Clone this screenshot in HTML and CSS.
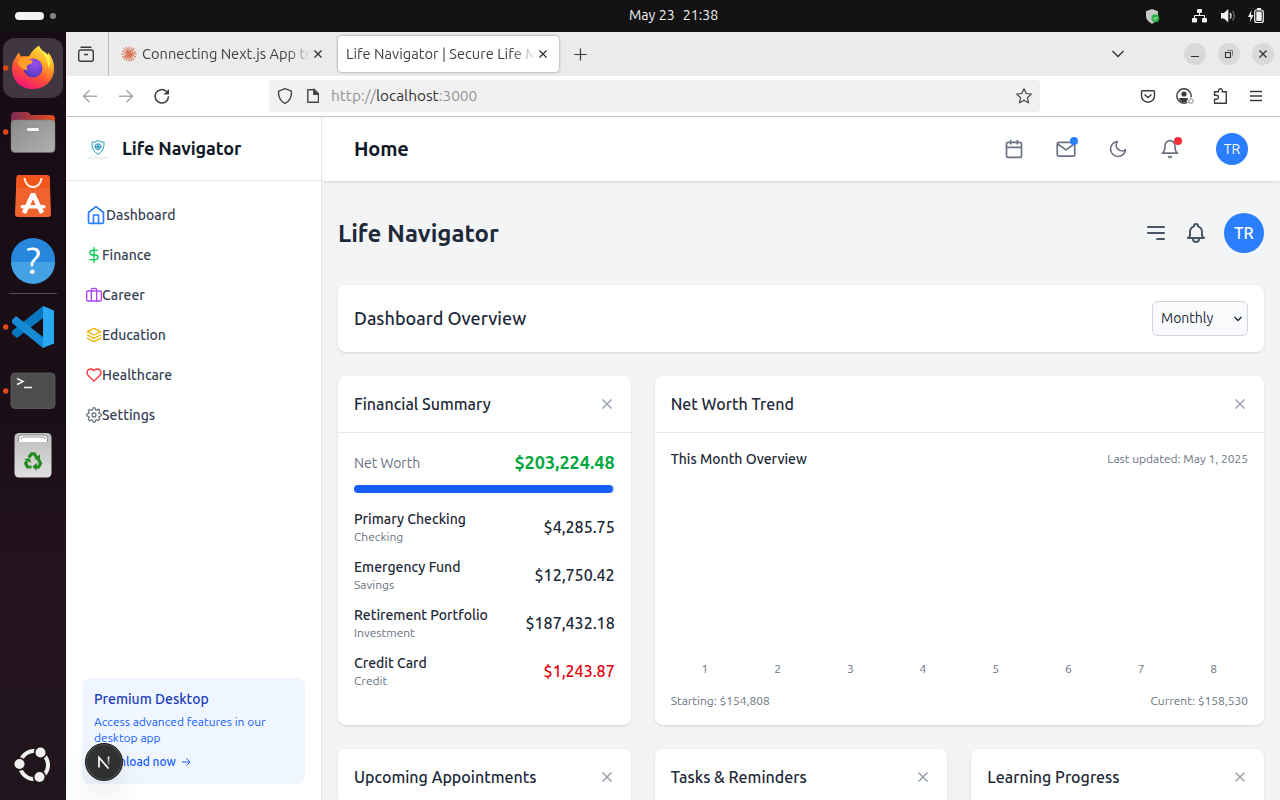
FILE: index.html
```html
<!DOCTYPE html>
<html lang="en">
<head>
<meta charset="utf-8">
<title>Life Navigator | Secure Life Management</title>
<link rel="stylesheet" href="styles.css">
</head>
<body>
<header class="topbar">
  <div class="workspaces"><i class="pill"></i><i class="dot"></i></div>
  <div class="clock"><span>May 23</span><span>21:38</span></div>
  <svg class="tray" width="140" height="32" viewBox="1140 0 140 32">
    <path d="M1152 9l6 2.300v4.500c0 4-3 6.500-6 8-3-1.500-6-4-6-8v-4.500z" fill="#c9c9c9"/>
    <circle cx="1155.300" cy="18.200" r="3.900" fill="#2fb344"/><path d="M1153.600 18.200l1.300 1.300 2.200-2.400" stroke="#d9ffd9" fill="none"/>
    <g fill="#f2f2f2"><rect x="1197" y="9" width="5" height="4" rx="1"/><rect x="1192" y="18" width="5" height="4.500" rx="1"/><rect x="1202" y="18" width="5" height="4.500" rx="1"/></g>
    <path d="M1199.500 12v3.500M1194.500 18v-2.500h10v2.500" stroke="#f2f2f2" fill="none"/>
    <path d="M1221 13h3l4.300-4v13.600l-4.300-4.100h-3z" fill="#f2f2f2"/>
    <path d="M1230 13q2 2.700 0 5.500" stroke="#ddd" fill="none" stroke-width="1.400"/><path d="M1232.500 11q3.500 4.800 0 9.500" stroke="#666" fill="none" stroke-width="1.400"/>
    <path d="M1251.500 10l-3.500 7h2.500l-.5 5 3.500-7h-2.500z" fill="#f2f2f2"/>
    <rect x="1254.700" y="10" width="8.600" height="12.500" rx="2" fill="none" stroke="#f2f2f2" stroke-width="1.200"/><rect x="1256.300" y="11.500" width="5.400" height="9.500" fill="#f2f2f2"/><rect x="1257" y="8" width="4" height="2" fill="#f2f2f2"/>
  </svg>
</header>
<div class="desktop">
  <nav class="dock">
    <svg width="66" height="768" viewBox="0 32 66 768">
      <defs>
        <linearGradient id="wall" x1="0" y1="0" x2="0" y2="1"><stop offset="0" stop-color="#180b13"/><stop offset=".5" stop-color="#1b0f17"/><stop offset=".75" stop-color="#25141d"/><stop offset="1" stop-color="#20151c"/></linearGradient>
        <linearGradient id="fox" x1=".8" y1="0" x2=".3" y2="1"><stop offset="0" stop-color="#fff14a"/><stop offset=".35" stop-color="#ffab24"/><stop offset=".65" stop-color="#ff5233"/><stop offset="1" stop-color="#f0127c"/></linearGradient>
        <radialGradient id="globe" cx=".6" cy=".3" r=".8"><stop offset="0" stop-color="#a04bf0"/><stop offset="1" stop-color="#4736b5"/></radialGradient>
        <linearGradient id="fold" x1="0" y1="0" x2="1" y2="0"><stop offset="0" stop-color="#7b2a55"/><stop offset="1" stop-color="#e9501b"/></linearGradient>
        <linearGradient id="grey" x1="0" y1="0" x2="1" y2="1"><stop offset="0" stop-color="#8b8b8b"/><stop offset="1" stop-color="#b0b0b0"/></linearGradient>
        <linearGradient id="bin" x1="0" y1="0" x2="0" y2="1"><stop offset="0" stop-color="#bdbdbd"/><stop offset="1" stop-color="#e0e0e0"/></linearGradient>
      </defs>
      <rect y="32" width="66" height="768" fill="url(#wall)"/>
      <rect x="3" y="38" width="60" height="60" rx="12" fill="#403740"/>
      <g fill="#dd4814"><circle cx="5.700" cy="68" r="2.700"/><circle cx="5.700" cy="132" r="2.700"/><circle cx="5.700" cy="327" r="2.700"/><circle cx="5.700" cy="391" r="2.700"/></g>
      <path d="M12 69c0-5 1.500-9 4-12 .5-2 2-3.500 3.500-4.500 0 2 .5 3 1.500 4 3-.5 6-.5 8 0 2-4.500 6-8.500 10-11 1 4 3 5.500 6 8l1 3c2-1 2-3 2-4 4 4 6 10 6 16 0 12-9 20.500-21 20.500S12 81 12 69z" fill="url(#fox)"/>
      <circle cx="33" cy="68" r="9.500" fill="url(#globe)"/>
      <path d="M18 61c4-4 8-4 11-2 2 1.300 4 1 3.500 3-.8 2.500-4.500 2-5.500 4-.7 1.500 0 3 1 4-5 0-10-3-10-9z" fill="#ff9e28"/>
      <path d="M39 46c1 7 10 10 9 22 5-5 1-13-2-15-3-2-6-4-7-7z" fill="#fff04b"/>
      <path d="M11 116q0-4 4-4h12q2 0 3 2l1 1h20q4 0 4 4v12H11z" fill="url(#fold)"/>
      <rect x="11" y="120" width="44" height="32.500" rx="4" fill="url(#grey)" stroke="#777" stroke-width=".5"/><rect x="27" y="128" width="12" height="3" rx="1.500" fill="#f7f7f7"/>
      <path d="M19.500 175h27q3 0 3.200 3l1.300 36q0 3-3 3H18q-3 0-3-3l1.500-36q0-3 3-3z" fill="#f0632e"/><path d="M19.500 175h27q3 0 3.200 3l.3 10H16.200l.3-10q0-3 3-3z" fill="#f2551c"/>
      <path d="M24.500 178c1 12 16 12 17 0" fill="none" stroke="#fff0e4" stroke-width="2"/><path d="M24 213l9-19 9 19" fill="none" stroke="#fff" stroke-width="4.500" stroke-linejoin="bevel"/><rect x="20.500" y="205" width="25" height="3.500" rx="1.700" fill="#fff"/>
      <circle cx="33" cy="260" r="22" fill="#2687dc"/><path d="M11 262a22 22 0 0 0 44 0z" fill="#44a2e4"/><text class="help-mark" x="33.500" y="273.500" text-anchor="middle">?</text>
      <path d="M9 293.500h48" stroke="#55494f"/>
      <path d="M43 306v12L17 338l-5-4v-3z" fill="#0877bd"/><path d="M12 320l4-4 27 21v11l-31-25z" fill="#168ad4"/><path d="M43 306l11 4.500v33L43 348z" fill="#28a9f2"/>
      <rect x="11" y="373" width="44" height="35.500" rx="4" fill="#4d4d4d" stroke="#666" stroke-width=".7"/><path d="M17 378.500l6 3-6 3M24 387.500h8" fill="none" stroke="#f5f5f5" stroke-width="1.600"/>
      <rect x="14.500" y="433" width="37" height="44.500" rx="4.500" fill="url(#bin)"/><path d="M18.500 442v-3.500q0-3.500 3.500-3.500h22q3.500 0 3.500 3.500v3.500z" fill="#fff"/><path d="M18.500 442v-3.500q0-3.500 3.500-3.500h22q3.500 0 3.500 3.500v3.500M20.800 439l2-2H44l1.700 2" fill="none" stroke="#666" stroke-width=".7"/>
      <g fill="none" stroke="#258a20" stroke-width="3.200"><path d="M28.800 457.500l2.700-3.700h2.800l2.700 4.200"/><path d="M38.500 459.500l2 3.700-1.800 3.600h-3.200"/><path d="M31.500 467h-4l-1.800-3.500 1.300-2.500"/></g>
      <g fill="#258a20"><path d="M34.500 459.500l5.500.8v-6zM36.700 462.500v8.400l-4.200-4.200zM24 459l5.500-.8 2 4.800z"/></g>
      <circle cx="34" cy="765" r="14" fill="none" stroke="#f1f1f1" stroke-width="4"/>
      <g fill="#f1f1f1" stroke="#20151c" stroke-width="1.700"><circle cx="19.500" cy="764" r="5.900"/><circle cx="40.500" cy="752.500" r="5.900"/><circle cx="39.500" cy="777" r="5.900"/></g>
    </svg>
  </nav>
  <div class="window">
    <div class="tabbar">
      <div class="tab-tools"><svg width="20" height="20" viewBox="76 44 20 20" fill="none" stroke="#3b3b3b" stroke-width="1.400"><rect x="78.700" y="50" width="14.600" height="11.300" rx="2"/><path d="M80.500 47.200h11M84 54.500h4"/></svg></div>
      <div class="tab tab-idle">
        <svg width="18" height="18" viewBox="-9 -9 18 18" stroke="#d97757" stroke-width="1.100" stroke-linecap="round"><path d="M0-7V7M-7.300 0H7.300M-5-5.500L5 5.500M5-5L-5 5M-2.700-6.800L2.700 6.800M3-6.300L-2.700 6.500M-6.500-3L6.500 2.700M6.800-2.300L-6.500 3"/></svg>
        <span class="tab-title t-claude">Connecting Next.js App to</span>
        <svg class="tab-x" width="10" height="10" viewBox="0 0 10 10"><path d="M1.500 1.500l7 7m0-7l-7 7"/></svg>
      </div>
      <div class="tab tab-active">
        <span class="tab-title t-life">Life Navigator | Secure Life M</span>
        <svg class="tab-x" width="10" height="10" viewBox="0 0 10 10"><path d="M1.500 1.500l7 7m0-7l-7 7"/></svg>
      </div>
      <svg class="new-tab" width="14" height="14" viewBox="0 0 14 14"><path d="M7.500 1.500v12M1.500 7.500h12"/></svg>
      <svg class="win-controls" width="180" height="44" viewBox="1100 32 180 44" fill="none" stroke="#333" stroke-width="1.400">
        <path d="M1112.500 51l5.500 5.500 5.500-5.500"/>
        <g fill="#d9d9d9" stroke="none"><circle cx="1195" cy="54" r="11"/><circle cx="1229" cy="54" r="11"/><circle cx="1263" cy="54" r="11"/></g>
        <path d="M1191 56.500h8" stroke-width="1"/><rect x="1225.500" y="52.500" width="5" height="5" stroke-width="1.100"/><path d="M1227.500 50.500h5v5" stroke="#777" stroke-width="1"/><path d="M1259.500 50.500l7 7m0-7l-7 7"/>
      </svg>
    </div>
    <div class="navbar">
      <svg width="120" height="40" viewBox="66 76 120 40" fill="none" stroke="#3b3b3b" stroke-width="1.500"><path d="M97 96.300H83.500m6-6l-6 6 6 6M119 96.300h13.500m-6-6l6 6-6 6" stroke="#aaa"/><path d="M166.500 91.500a6.700 6.700 0 1 0 2 4.700"/><path d="M169 89v5.500h-5.500z" fill="#3b3b3b" stroke="none"/></svg>
      <div class="urlbar">
        <svg width="50" height="32" viewBox="269 80 50 32" fill="none" stroke="#444" stroke-width="1.400"><path d="M285 88.600l6.500 2.500c.3 6-1.500 10-6.500 12.300-5-2.300-6.800-6.300-6.500-12.300z" stroke-linejoin="round"/><path d="M308.500 89.700h6l4 4v8.600h-10.700V89.700z" stroke-linejoin="round"/><path d="M313.800 89.500v4.700h5z" fill="#444"/></svg>
        <span class="url"><i>http://</i>localhost<i>:3000</i></span>
        <svg class="star" width="18" height="18" viewBox="-9 -9 18 18" fill="none" stroke="#444" stroke-width="1.200" stroke-linejoin="round"><path d="M0-7.200l2.200 4.700 5.100.600-3.800 3.500 1 5.200L0 4.200-4.500 6.800l1-5.200-3.800-3.500 5.100-.6z"/></svg>
      </div>
      <svg class="nav-tools" width="150" height="40" viewBox="1130 76 150 40" fill="none" stroke="#3b3b3b" stroke-width="1.400">
        <path d="M1142.500 90.700h11q1 0 1 1v4a6.500 6.500 0 0 1-13 0v-4q0-1 1-1zM1144.500 94.500l3.500 3 3.500-3"/>
        <circle cx="1184" cy="96" r="7.200"/><circle cx="1184" cy="94" r="2.600" fill="#3b3b3b" stroke="none"/><path d="M1179 98h9.500q-.5 4.300-4.500 4.300t-5-4.300z" fill="#3b3b3b" stroke="none"/><circle cx="1191" cy="101" r="3.800" fill="#fff" stroke="none"/><circle cx="1191" cy="101" r="2.300" stroke="#888" stroke-width="1"/>
        <path d="M1214.500 103.300v-4h2q2-.3 2-2t-2-2h-2v-3.500h4v-1.300q.3-1.700 1.900-1.700t1.900 1.700v1.300h4v11.500z" stroke-linejoin="round"/>
        <path d="M1250 91.500h12M1250 96h12M1250 100.500h12"/>
      </svg>
    </div>
    <div class="app">
      <aside class="sidebar">
        <div class="brand">
          <svg width="32" height="32" viewBox="82 132 32 32" fill="none"><path d="M98 139.500q3 1.700 6 1.900.700 8.300-6 11.800-6.700-3.500-6-11.800 3-.2 6-1.900z" stroke="#49b7cb" stroke-width="1.200"/><circle cx="98" cy="145.700" r="2.900" stroke="#3d8fc0" stroke-width="1"/><path d="M98 141.300l1 3.400 3.400 1-3.400 1-1 3.400-1-3.400-3.400-1 3.400-1z" fill="#3aa3c9"/><text class="logo-text" x="98" y="157.500" text-anchor="middle">LifeNavigator</text></svg>
          <span class="t-brand">Life Navigator</span>
        </div>
        <ul class="menu">
          <li><svg class="ico home" viewBox="0 0 24 24"><path d="M3 9l9-7 9 7v11a2 2 0 0 1-2 2H5a2 2 0 0 1-2-2z"/><path d="M9 22V12h6v10"/></svg><span>Dashboard</span></li>
          <li><svg class="ico money" viewBox="0 0 24 24"><path d="M12 1v22M17 5H9.500a3.500 3.500 0 0 0 0 7h5a3.500 3.500 0 0 1 0 7H6"/></svg><span>Finance</span></li>
          <li><svg class="ico career" viewBox="0 0 24 24"><rect x="1" y="6" width="22" height="15" rx="2"/><path d="M16 21V4a2 2 0 0 0-2-2h-4a2 2 0 0 0-2 2v17"/></svg><span>Career</span></li>
          <li><svg class="ico edu" viewBox="0 0 24 24"><path d="M12 2L2 7l10 5 10-5zM2 17l10 5 10-5M2 12l10 5 10-5"/></svg><span>Education</span></li>
          <li><svg class="ico heart" viewBox="0 0 24 24"><path d="M20.840 4.610a5.500 5.500 0 0 0-7.780 0L12 5.670l-1.060-1.060a5.500 5.500 0 0 0-7.780 7.780l1.060 1.060L12 21.230l7.780-7.780 1.060-1.060a5.500 5.500 0 0 0 0-7.780z"/></svg><span>Healthcare</span></li>
          <li><svg class="ico gear" viewBox="0 0 24 24"><circle cx="12" cy="12" r="3"/><path d="M19.400 15a1.650 1.650 0 0 0 .33 1.820l.06.06a2 2 0 0 1-2.830 2.830l-.06-.06a1.650 1.650 0 0 0-2.800 1.170V21a2 2 0 0 1-4 0v-.09A1.650 1.650 0 0 0 9 19.400a1.650 1.650 0 0 0-1.820.33l-.06.06a2 2 0 0 1-2.830-2.830l.06-.06A1.650 1.650 0 0 0 3.090 14H3a2 2 0 0 1 0-4h.09A1.650 1.650 0 0 0 4.600 9a1.650 1.650 0 0 0-.33-1.820l-.06-.06a2 2 0 0 1 2.830-2.830l.06.06A1.650 1.650 0 0 0 10 3.090V3a2 2 0 0 1 4 0v.09a1.650 1.650 0 0 0 2.820 1.170l.06-.06a2 2 0 0 1 2.830 2.830l-.06.06A1.650 1.650 0 0 0 20.910 10H21a2 2 0 0 1 0 4h-.09a1.650 1.650 0 0 0-1.510 1z"/></svg><span>Settings</span></li>
        </ul>
        <div class="promo">
          <h4>Premium Desktop</h4>
          <p>Access advanced features in our<br>desktop app</p>
          <a>Download now <svg width="10" height="10" viewBox="0 0 10 10"><path d="M1 5h8M5.500 1.500L9 5 5.500 8.500" fill="none" stroke="currentColor"/></svg></a>
          <div class="next-badge"><svg width="14" height="14" viewBox="0 0 14 14" fill="none"><defs><linearGradient id="fade" x1="0" y1="0" x2="0" y2="1"><stop offset="0" stop-color="#fff"/><stop offset="1" stop-color="#fff" stop-opacity=".2"/></linearGradient></defs><path d="M2 12.500V2.500l9.500 11" stroke="#fff" stroke-width="1.700"/><path d="M10.700 1.500h1.700v8.500h-1.700z" fill="url(#fade)"/></svg></div>
        </div>
      </aside>
      <main class="main">
        <header class="page-head">
          <h1>Home</h1>
          <div class="head-icons">
            <svg class="ico" viewBox="0 0 24 24"><rect x="3" y="4" width="18" height="18" rx="2"/><path d="M16 2v4M8 2v4M3 10h18"/></svg>
            <div class="with-dot blue"><svg class="ico" viewBox="0 0 24 24"><rect x="1.500" y="4" width="21" height="16.500" rx="2"/><path d="M22 6l-10 7L2 6"/></svg></div>
            <svg class="ico" viewBox="0 0 24 24"><path d="M21 12.790A9 9 0 1 1 11.210 3 7 7 0 0 0 21 12.790z"/></svg>
            <div class="with-dot red"><svg class="ico" viewBox="0 0 24 24"><path d="M18 8A6 6 0 0 0 6 8c0 7-3 9-3 9h18s-3-2-3-9M13.730 21a2 2 0 0 1-3.460 0"/></svg></div>
          </div>
          <div class="avatar small">TR</div>
        </header>
        <div class="content">
          <div class="title-row">
            <h2>Life Navigator</h2>
            <svg class="tool" viewBox="0 0 24 24"><path d="M4 6h16M4 12h16m-7 6h7"/></svg>
            <svg class="tool" viewBox="0 0 24 24"><path d="M15 17h5l-1.405-1.405A2.032 2.032 0 0 1 18 14.158V11a6 6 0 0 0-4-5.659V5a2 2 0 1 0-4 0v.341C7.670 6.165 6 8.388 6 11v3.159c0 .538-.214 1.055-.595 1.436L4 17h5m6 0v1a3 3 0 1 1-6 0v-1m6 0H9"/></svg>
            <div class="avatar">TR</div>
          </div>
          <section class="card overview"><h3>Dashboard Overview</h3>
            <div class="select"><span>Monthly</span><svg width="10" height="8" viewBox="0 0 10 8"><path d="M1.500 2l3.500 3.500L8.500 2"/></svg></div>
          </section>
          <div class="grid">
            <section class="card">
              <div class="card-head"><h3>Financial Summary</h3><svg class="close" viewBox="0 0 12 12"><path d="M1.500 1.500l9 9m0-9l-9 9"/></svg></div>
              <div class="card-body">
                <div class="networth"><span>Net Worth</span><b>$203,224.48</b></div>
                <div class="progress"><div class="fill"></div></div>
                <div class="accounts">
                  <div class="account"><div><p>Primary Checking</p><small>Checking</small></div><strong>$4,285.75</strong></div>
                  <div class="account"><div><p>Emergency Fund</p><small>Savings</small></div><strong>$12,750.42</strong></div>
                  <div class="account"><div><p>Retirement Portfolio</p><small>Investment</small></div><strong>$187,432.18</strong></div>
                  <div class="account"><div><p>Credit Card</p><small>Credit</small></div><strong class="debt">$1,243.87</strong></div>
                </div>
              </div>
            </section>
            <section class="card wide">
              <div class="card-head"><h3>Net Worth Trend</h3><svg class="close" viewBox="0 0 12 12"><path d="M1.500 1.500l9 9m0-9l-9 9"/></svg></div>
              <div class="card-body trend">
                <div class="between"><p class="month">This Month Overview</p><small>Last updated: May 1, 2025</small></div>
                <div class="axis"><small>1</small><small>2</small><small>3</small><small>4</small><small>5</small><small>6</small><small>7</small><small>8</small></div>
                <div class="between"><small>Starting: $154,808</small><small>Current: $158,530</small></div>
              </div>
            </section>
            <section class="card"><div class="card-head"><h3>Upcoming Appointments</h3><svg class="close" viewBox="0 0 12 12"><path d="M1.500 1.500l9 9m0-9l-9 9"/></svg></div></section>
            <section class="card"><div class="card-head"><h3>Tasks &amp; Reminders</h3><svg class="close" viewBox="0 0 12 12"><path d="M1.500 1.500l9 9m0-9l-9 9"/></svg></div></section>
            <section class="card"><div class="card-head"><h3>Learning Progress</h3><svg class="close" viewBox="0 0 12 12"><path d="M1.500 1.500l9 9m0-9l-9 9"/></svg></div></section>
          </div>
        </div>
      </main>
    </div>
  </div>
</div>
</body>
</html>
```
FILE: styles.css
```css
* { box-sizing: border-box; margin: 0; padding: 0; }
body { width: 1280px; height: 800px; overflow: hidden; display: flex; flex-direction: column; font-family: Ubuntu, "Noto Sans", sans-serif; font-size: 14px; color: #1e2939; }
svg { display: block; flex: none; }
span, h1, h2, h3, h4, p, small, b, strong, a { white-space: nowrap; }
i { font-style: normal; }

.topbar { height: 32px; flex: none; background: #131313; display: grid; grid-template-columns: 629px auto 1fr; align-items: center; color: #f2f2f2; }
.workspaces { display: flex; align-items: center; gap: 6px; padding-left: 15px; }
.pill { width: 29px; height: 8px; border-radius: 4px; background: #f4f4f4; }
.dot { width: 6px; height: 6px; border-radius: 50%; background: #858585; }
.clock { display: flex; gap: 8px; font-size: 14.200px; line-height: 20px; padding-bottom: 2px; }
.tray { justify-self: end; }

.desktop { display: flex; flex: 1; min-height: 0; }
.dock { width: 66px; flex: none; }
.help-mark { font-size: 38px; fill: #fff; }
.window { flex: 1; min-width: 0; display: flex; flex-direction: column; background: #fff; }

.tabbar { height: 44px; flex: none; display: flex; align-items: center; background: #ebebeb; color: #3f3f42; }
.tab-tools { width: 43px; height: 44px; border-right: 1px solid #bdbdbd; display: flex; align-items: center; padding-left: 10px; }
.tab { display: flex; align-items: center; height: 36px; border-radius: 4px; }
.tab-idle { width: 229px; padding-left: 11px; }
.tab-active { width: 221px; background: #fff; box-shadow: 0 0 3px #0006; padding-left: 8px; }
.tab-title { font-size: 14.670px; line-height: 20px; overflow: hidden; -webkit-mask-image: linear-gradient(to right, #000 calc(100% - 24px), transparent); mask-image: linear-gradient(to right, #000 calc(100% - 24px), transparent); }
.t-claude { width: 169px; margin-left: 4px; }
.t-life { width: 190px; }
.tab-x, .new-tab { fill: none; stroke: #333; stroke-width: 1.400; }
.new-tab { stroke-width: 1.200; }
.tab-x { margin-left: 2px; }
.new-tab { margin-left: 14px; }
.win-controls { margin-left: auto; }

.navbar { height: 41px; flex: none; border-bottom: 1px solid #c4c4c4; display: flex; align-items: flex-start; }
.urlbar { width: 771px; height: 32px; margin: 4px 0 0 83px; background: #f1f1f1; border-radius: 4px; display: flex; align-items: center; }
.url { margin-left: 12px; font-size: 15.400px; line-height: 20px; color: #333; }
.url i { color: #949494; }
.star { margin: 0 7px 0 auto; }
.nav-tools { margin-left: auto; }

.app { flex: 1; min-height: 0; display: flex; overflow: hidden; }
.sidebar { width: 256px; flex: none; border-right: 1px solid #e5e7eb; display: flex; flex-direction: column; }
.brand { height: 64px; border-bottom: 1px solid #e5e7eb; padding-left: 16px; display: flex; align-items: center; gap: 8px; color: #101828; }
.t-brand { font-size: 18px; line-height: 28px; font-weight: 600; letter-spacing: -.1px; padding-bottom: 2px; }
.logo-text { font-size: 3.500px; fill: #ccd3d8; }
.menu { list-style: none; padding: 14px 0 0 20px; }
.menu li { height: 40px; display: flex; align-items: center; font-weight: 500; font-size: 14px; line-height: 20px; color: #364153; }
.ico { width: 20px; height: 20px; fill: none; stroke: #6a7282; stroke-width: 2; stroke-linecap: round; stroke-linejoin: round; }
.menu .ico { width: 16px; height: 16px; }
.menu .home { width: 20px; height: 20px; stroke: #2b7fff; }
.menu .money { stroke: #00c950; }
.menu .career { stroke: #ad46ff; }
.menu .edu { stroke: #f0b100; }
.menu .heart { stroke: #fb2c36; }
.promo { position: relative; margin: auto 16px 16px; height: 106px; border-radius: 8px; background: #eff6ff; padding: 11px 12px; color: #155dfc; font-size: 12px; line-height: 16px; }
.promo h4 { font-size: 14px; line-height: 20px; font-weight: 500; color: #193cb8; margin-bottom: 5px; }
.promo a { display: flex; align-items: center; gap: 5px; margin-top: 8px; font-weight: 500; }
.next-badge { position: absolute; left: 3px; top: 65px; width: 38px; height: 38px; border-radius: 50%; background: #2f3032; border: 1px solid #111; box-shadow: inset 0 0 0 1px #555, 0 16px 32px -8px #0000003d; display: flex; align-items: center; justify-content: center; }

.main { flex: 1; min-width: 0; background: #f3f4f6; overflow: hidden; }
.page-head { height: 64px; background: #fff; box-shadow: 0 1px 3px #0000001f; padding: 0 32px; display: flex; align-items: center; }
h1 { font-size: 20px; line-height: 28px; font-weight: 600; letter-spacing: -.2px; color: #101828; }
.head-icons { margin-left: auto; display: flex; gap: 32px; }
.with-dot { position: relative; }
.with-dot::after { content: ""; position: absolute; top: -2px; right: -2px; width: 8px; height: 8px; border-radius: 50%; }
.blue::after { background: #2b7fff; }
.red::after { background: #fb2c36; }
.avatar { width: 40px; height: 40px; border-radius: 50%; background: #2b7fff; color: #fff; display: flex; align-items: center; justify-content: center; font-size: 16px; line-height: 24px; font-weight: 500; margin-left: 16px; }
.avatar.small { width: 32px; height: 32px; font-size: 14px; line-height: 20px; font-weight: 400; margin-left: 36px; }
.content { padding: 32px 16px 0; }
.title-row { height: 40px; display: flex; align-items: center; margin-bottom: 32px; }
h2 { font-size: 24px; line-height: 32px; font-weight: 700; margin-right: auto; padding-top: 2px; }
.tool { width: 24px; height: 24px; fill: none; stroke: #4a5565; stroke-width: 2; stroke-linecap: round; stroke-linejoin: round; }
.tool + .tool { margin-left: 16px; }

.card { background: #fff; border-radius: 8px; box-shadow: 0 1px 3px #0000001a, 0 1px 2px -1px #0000001a; }
h3 { font-size: 16px; line-height: 24px; font-weight: 500; }
.overview { height: 67px; padding: 0 16px; display: flex; align-items: center; justify-content: space-between; margin-bottom: 24px; }
.overview h3 { font-size: 18px; line-height: 28px; padding-bottom: 2px; }
.select { width: 96px; height: 35px; border: 1px solid #d1d5dc; border-radius: 6px; background: #f9fafb; display: flex; align-items: center; justify-content: space-between; padding: 0 4px 0 8px; font-size: 14px; line-height: 17px; }
.select svg { fill: none; stroke: #1e2939; stroke-width: 1.500; }
.grid { display: grid; grid-template-columns: repeat(3, 1fr); grid-template-rows: 349px 57px; gap: 24px; }
.wide { grid-column: span 2; }
.card-head { height: 57px; border-bottom: 1px solid #e5e7eb; padding: 0 18px 0 16px; display: flex; align-items: center; justify-content: space-between; }
.close { width: 12px; height: 12px; fill: none; stroke: #99a1af; stroke-width: 1.500; }
.card-body { padding: 16px; }
.networth { display: flex; justify-content: space-between; align-items: center; height: 28px; color: #6a7282; font-size: 14px; line-height: 20px; }
.networth b { font-size: 18px; line-height: 26px; padding-bottom: 2px; font-weight: 600; color: #00a63e; }
.progress { height: 8px; margin: 8px 0 16px; border-radius: 4px; background: #e5e7eb; }
.fill { width: 99.400%; height: 8px; border-radius: 4px; background: #155dfc; }
.accounts { display: grid; gap: 12px; }
.account { height: 36px; display: flex; align-items: center; justify-content: space-between; }
p { line-height: 20px; }
.account p, .month { font-size: 14px; font-weight: 500; }
small { display: block; font-size: 12px; line-height: 16px; color: #6a7282; }
.account strong { font-size: 16px; line-height: 24px; font-weight: 500; }
.account .debt { color: #e7000b; }
.promo p { line-height: 16px; }
.trend { height: 292px; display: flex; flex-direction: column; }
.between { display: flex; justify-content: space-between; align-items: center; }
.axis { margin: auto 0 16px; display: flex; gap: 4px; }
.axis small { flex: 1; text-align: center; }
```
